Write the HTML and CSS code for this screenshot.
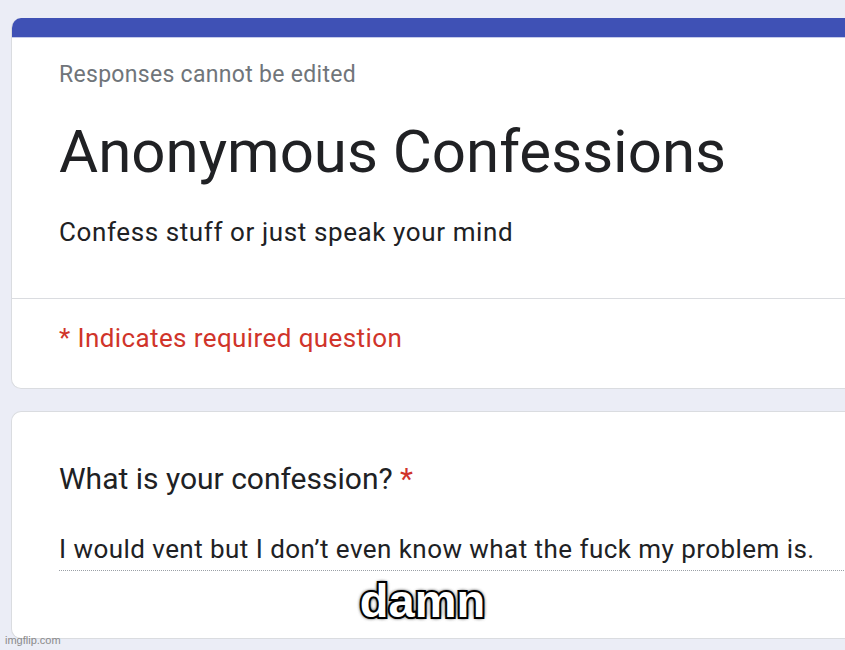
FILE: index.html
```html
<!DOCTYPE html>
<html lang="en">
<head>
    <meta charset="UTF-8">
    <title>Anonymous Confessions</title>
    <link rel="stylesheet" href="styles.css">
</head>
<body>
    <div class="page">
        <div class="card header-card">
            <div class="bar"></div>
            <div class="header-body">
                <p class="note">Responses cannot be edited</p>
                <h1>Anonymous Confessions</h1>
                <p class="desc">Confess stuff or just speak your mind</p>
            </div>
            <div class="required-row">
                <p class="required">* Indicates required question</p>
            </div>
        </div>
        <div class="card question-card">
            <p class="question">What is your confession? <span class="star">*</span></p>
            <p class="answer">I would vent but I don’t even know what the fuck my problem is.</p>
        </div>
    </div>
    <div class="caption">damn</div>
    <div class="watermark">imgflip.com</div>
</body>
</html>
```

FILE: styles.css
```css
* { margin: 0; padding: 0; box-sizing: border-box; }
body {
    font-family: Roboto, "Liberation Sans", sans-serif;
    background: #ebedf6;
    width: 845px;
    height: 650px;
    overflow: hidden;
    position: relative;
}
.page {
    padding: 18px 0 0 11px;
    display: flex;
    flex-direction: column;
    gap: 22px;
}
.card {
    background: #fff;
    border: 1px solid #dadce0;
    border-right: none;
    border-radius: 10px 0 0 10px;
    width: 850px;
}
.header-card {
    border-top: none;
    height: 371px;
    overflow: hidden;
}
.bar {
    height: 20px;
    background: #3f51b5;
    border-bottom: 1px solid #c5cbea;
}
.header-body {
    padding: 23px 47px 0;
    height: 261px;
    border-bottom: 1px solid #dadce0;
}
.note {
    font-size: 23px;
    letter-spacing: 0.3px;
    color: #70757a;
    line-height: 28px;
}
h1 {
    font-weight: 400;
    font-size: 60px;
    color: #202124;
    line-height: 70px;
    margin-top: 28px;
}
.desc {
    font-size: 26px;
    letter-spacing: 0.6px;
    color: #202124;
    line-height: 32px;
    margin-top: 29px;
}
.required-row {
    padding: 23px 47px 0;
}
.required {
    font-size: 26px;
    letter-spacing: 0.4px;
    color: #d0342a;
    line-height: 32px;
}
.question-card {
    height: 228px;
    padding: 49px 47px 0;
}
.question {
    font-size: 30px;
    color: #202124;
    line-height: 36px;
}
.star { color: #d0342a; }
.answer {
    margin-top: 36px;
    font-size: 26px;
    letter-spacing: 0.45px;
    color: #202124;
    line-height: 32px;
    padding-bottom: 5px;
    border-bottom: 1px dotted #9aa0a6;
    margin-right: -40px;
}
.caption {
    position: absolute;
    left: 0;
    width: 845px;
    top: 573px;
    text-align: center;
    font-family: "Liberation Sans", Arial, sans-serif;
    font-weight: 700;
    font-size: 47px;
    color: #fff;
    -webkit-text-stroke: 4px #000;
    paint-order: stroke fill;
    text-shadow: 0 0 4px #000, 0 0 4px #000, 0 0 3px #000;
}
.watermark {
    position: absolute;
    left: 5px;
    top: 634px;
    font-family: "Liberation Sans", Arial, sans-serif;
    font-size: 11px;
    color: #8a8a8a;
}
```
